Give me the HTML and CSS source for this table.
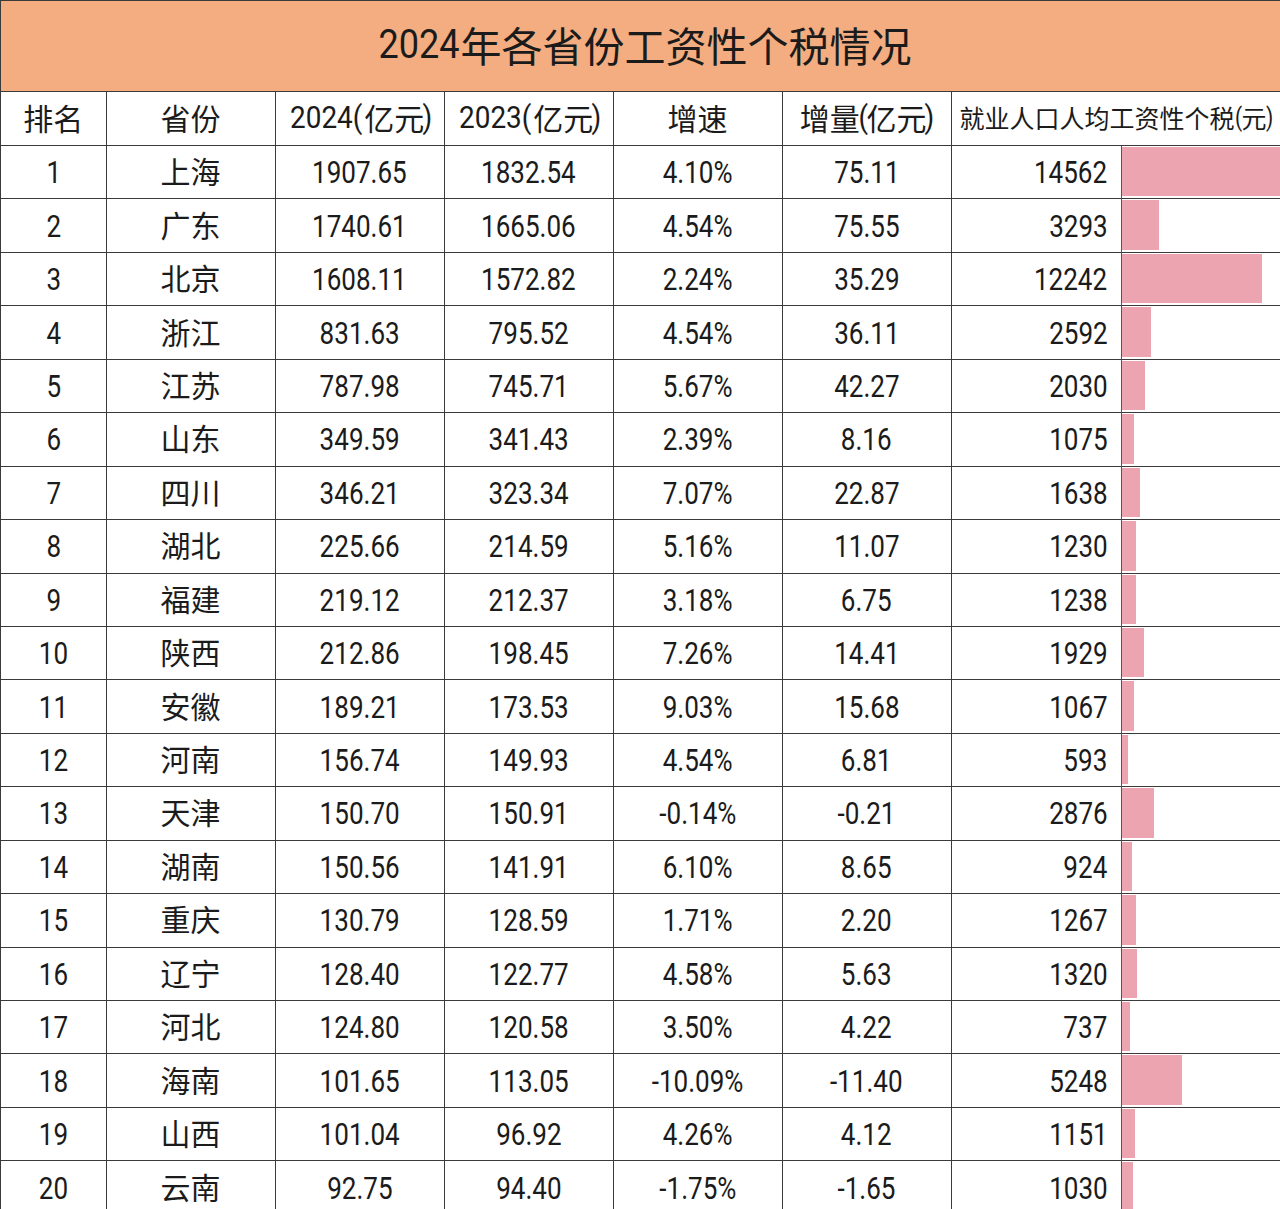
FILE: index.html
```html
<!DOCTYPE html>
<html lang="zh-CN">
<head>
<meta charset="utf-8">
<title>2024年各省份工资性个税情况</title>
<link rel="stylesheet" href="styles.css">
</head>
<body>
<div class="sheet">
  <div class="title"><span class="tn">2024</span>年各省份工资性个税情况</div>
  <div class="grid">
    <div class="c h zh">排名</div>
    <div class="c h zh">省份</div>
    <div class="c h"><span class="hn">2024(</span>亿元<span class="hn">)</span></div>
    <div class="c h"><span class="hn">2023(</span>亿元<span class="hn">)</span></div>
    <div class="c h zh">增速</div>
    <div class="c h"><span>增量</span><span class="hn">(</span>亿元<span class="hn">)</span></div>
    <div class="c h hw">就业人口人均工资性个税<span class="hw-p">(</span>元<span class="hw-p">)</span></div>

    <div class="c"><span class="n">1</span></div><div class="c zh">上海</div><div class="c"><span class="n">1907.65</span></div><div class="c"><span class="n">1832.54</span></div><div class="c"><span class="n">4.10%</span></div><div class="c"><span class="n">75.11</span></div><div class="c r"><span class="n">14562</span></div><div class="c b"><span class="bar" style="width:166.6px"></span></div>
    <div class="c"><span class="n">2</span></div><div class="c zh">广东</div><div class="c"><span class="n">1740.61</span></div><div class="c"><span class="n">1665.06</span></div><div class="c"><span class="n">4.54%</span></div><div class="c"><span class="n">75.55</span></div><div class="c r"><span class="n">3293</span></div><div class="c b"><span class="bar" style="width:37.7px"></span></div>
    <div class="c"><span class="n">3</span></div><div class="c zh">北京</div><div class="c"><span class="n">1608.11</span></div><div class="c"><span class="n">1572.82</span></div><div class="c"><span class="n">2.24%</span></div><div class="c"><span class="n">35.29</span></div><div class="c r"><span class="n">12242</span></div><div class="c b"><span class="bar" style="width:140px"></span></div>
    <div class="c"><span class="n">4</span></div><div class="c zh">浙江</div><div class="c"><span class="n">831.63</span></div><div class="c"><span class="n">795.52</span></div><div class="c"><span class="n">4.54%</span></div><div class="c"><span class="n">36.11</span></div><div class="c r"><span class="n">2592</span></div><div class="c b"><span class="bar" style="width:29.7px"></span></div>
    <div class="c"><span class="n">5</span></div><div class="c zh">江苏</div><div class="c"><span class="n">787.98</span></div><div class="c"><span class="n">745.71</span></div><div class="c"><span class="n">5.67%</span></div><div class="c"><span class="n">42.27</span></div><div class="c r"><span class="n">2030</span></div><div class="c b"><span class="bar" style="width:23.2px"></span></div>
    <div class="c"><span class="n">6</span></div><div class="c zh">山东</div><div class="c"><span class="n">349.59</span></div><div class="c"><span class="n">341.43</span></div><div class="c"><span class="n">2.39%</span></div><div class="c"><span class="n">8.16</span></div><div class="c r"><span class="n">1075</span></div><div class="c b"><span class="bar" style="width:12.3px"></span></div>
    <div class="c"><span class="n">7</span></div><div class="c zh">四川</div><div class="c"><span class="n">346.21</span></div><div class="c"><span class="n">323.34</span></div><div class="c"><span class="n">7.07%</span></div><div class="c"><span class="n">22.87</span></div><div class="c r"><span class="n">1638</span></div><div class="c b"><span class="bar" style="width:18.7px"></span></div>
    <div class="c"><span class="n">8</span></div><div class="c zh">湖北</div><div class="c"><span class="n">225.66</span></div><div class="c"><span class="n">214.59</span></div><div class="c"><span class="n">5.16%</span></div><div class="c"><span class="n">11.07</span></div><div class="c r"><span class="n">1230</span></div><div class="c b"><span class="bar" style="width:14.1px"></span></div>
    <div class="c"><span class="n">9</span></div><div class="c zh">福建</div><div class="c"><span class="n">219.12</span></div><div class="c"><span class="n">212.37</span></div><div class="c"><span class="n">3.18%</span></div><div class="c"><span class="n">6.75</span></div><div class="c r"><span class="n">1238</span></div><div class="c b"><span class="bar" style="width:14.2px"></span></div>
    <div class="c"><span class="n">10</span></div><div class="c zh">陕西</div><div class="c"><span class="n">212.86</span></div><div class="c"><span class="n">198.45</span></div><div class="c"><span class="n">7.26%</span></div><div class="c"><span class="n">14.41</span></div><div class="c r"><span class="n">1929</span></div><div class="c b"><span class="bar" style="width:22.1px"></span></div>
    <div class="c"><span class="n">11</span></div><div class="c zh">安徽</div><div class="c"><span class="n">189.21</span></div><div class="c"><span class="n">173.53</span></div><div class="c"><span class="n">9.03%</span></div><div class="c"><span class="n">15.68</span></div><div class="c r"><span class="n">1067</span></div><div class="c b"><span class="bar" style="width:12.2px"></span></div>
    <div class="c"><span class="n">12</span></div><div class="c zh">河南</div><div class="c"><span class="n">156.74</span></div><div class="c"><span class="n">149.93</span></div><div class="c"><span class="n">4.54%</span></div><div class="c"><span class="n">6.81</span></div><div class="c r"><span class="n">593</span></div><div class="c b"><span class="bar" style="width:6.8px"></span></div>
    <div class="c"><span class="n">13</span></div><div class="c zh">天津</div><div class="c"><span class="n">150.70</span></div><div class="c"><span class="n">150.91</span></div><div class="c"><span class="n">-0.14%</span></div><div class="c"><span class="n">-0.21</span></div><div class="c r"><span class="n">2876</span></div><div class="c b"><span class="bar" style="width:32.9px"></span></div>
    <div class="c"><span class="n">14</span></div><div class="c zh">湖南</div><div class="c"><span class="n">150.56</span></div><div class="c"><span class="n">141.91</span></div><div class="c"><span class="n">6.10%</span></div><div class="c"><span class="n">8.65</span></div><div class="c r"><span class="n">924</span></div><div class="c b"><span class="bar" style="width:10.6px"></span></div>
    <div class="c"><span class="n">15</span></div><div class="c zh">重庆</div><div class="c"><span class="n">130.79</span></div><div class="c"><span class="n">128.59</span></div><div class="c"><span class="n">1.71%</span></div><div class="c"><span class="n">2.20</span></div><div class="c r"><span class="n">1267</span></div><div class="c b"><span class="bar" style="width:14.5px"></span></div>
    <div class="c"><span class="n">16</span></div><div class="c zh">辽宁</div><div class="c"><span class="n">128.40</span></div><div class="c"><span class="n">122.77</span></div><div class="c"><span class="n">4.58%</span></div><div class="c"><span class="n">5.63</span></div><div class="c r"><span class="n">1320</span></div><div class="c b"><span class="bar" style="width:15.1px"></span></div>
    <div class="c"><span class="n">17</span></div><div class="c zh">河北</div><div class="c"><span class="n">124.80</span></div><div class="c"><span class="n">120.58</span></div><div class="c"><span class="n">3.50%</span></div><div class="c"><span class="n">4.22</span></div><div class="c r"><span class="n">737</span></div><div class="c b"><span class="bar" style="width:8.4px"></span></div>
    <div class="c"><span class="n">18</span></div><div class="c zh">海南</div><div class="c"><span class="n">101.65</span></div><div class="c"><span class="n">113.05</span></div><div class="c"><span class="n">-10.09%</span></div><div class="c"><span class="n">-11.40</span></div><div class="c r"><span class="n">5248</span></div><div class="c b"><span class="bar" style="width:60px"></span></div>
    <div class="c"><span class="n">19</span></div><div class="c zh">山西</div><div class="c"><span class="n">101.04</span></div><div class="c"><span class="n">96.92</span></div><div class="c"><span class="n">4.26%</span></div><div class="c"><span class="n">4.12</span></div><div class="c r"><span class="n">1151</span></div><div class="c b"><span class="bar" style="width:13.2px"></span></div>
    <div class="c"><span class="n">20</span></div><div class="c zh">云南</div><div class="c"><span class="n">92.75</span></div><div class="c"><span class="n">94.40</span></div><div class="c"><span class="n">-1.75%</span></div><div class="c"><span class="n">-1.65</span></div><div class="c r"><span class="n">1030</span></div><div class="c b"><span class="bar" style="width:11.8px"></span></div>
  </div>
</div>
</body>
</html>
```
FILE: styles.css
```css
html, body {
  margin: 0;
  padding: 0;
  background: #ffffff;
  overflow: hidden;
}
body {
  width: 1280px;
  height: 1209px;
  font-family: "Noto Sans CJK SC", "Noto Sans", sans-serif;
  color: #1b1b1b;
}
.sheet {
  width: 1300px;
  border-left: 1.5px solid #3a3a3a;
  border-top: 1.5px solid #3a3a3a;
}
.title {
  height: 91px;
  background: #f3ad80;
  border-bottom: 1.5px solid #3a3a3a;
  display: flex;
  align-items: center;
  justify-content: center;
  font-size: 41px;
  width: 1280px;
  box-sizing: border-box;
  padding-bottom: 4px;
  padding-left: 8px;
  line-height: 1;
}
.tn {
  font-family: Roboto, sans-serif;
  display: inline-block;
  transform: scaleX(0.88);
  margin: 0 -5px;
}
.grid {
  display: grid;
  grid-template-columns: 105.5px 169px 169px 169px 169px 169px 170px 178px;
  grid-template-rows: 54px;
  grid-auto-rows: 53.45px;
}
.c {
  border-right: 1.5px solid #3a3a3a;
  border-bottom: 1.5px solid #3a3a3a;
  display: flex;
  align-items: center;
  justify-content: center;
  font-size: 30px;
  line-height: 1;
  box-sizing: border-box;
  white-space: nowrap;
}
.zh {
  padding-bottom: 4px;
}
.n {
  font-family: Roboto, sans-serif;
  font-size: 31px;
  display: inline-block;
  transform: scaleX(0.84);
  padding-top: 1px;
}
.h {
  font-size: 30px;
  padding-bottom: 3px;
}
.hn {
  font-family: Roboto, sans-serif;
  font-size: 31px;
  display: inline-block;
  transform: scaleX(0.9);
  margin: 0 -2px;
}
.hw {
  grid-column: span 2;
  justify-content: flex-start;
  font-size: 25px;
  padding-left: 8px;
  border-right: none;
}
.hw-p {
  font-family: Roboto, sans-serif;
  font-size: 26px;
  display: inline-block;
  transform: scaleX(0.8);
  margin: 0 -1px;
}
.r {
  justify-content: flex-end;
  padding-right: 13px;
  border-right: 1px solid #555;
}
.r .n {
  transform-origin: right center;
}
.b {
  justify-content: flex-start;
  align-items: stretch;
  padding: 1px 0 2px 0;
  border-right: none;
}
.bar {
  display: block;
  background: #eca5b0;
}
```
